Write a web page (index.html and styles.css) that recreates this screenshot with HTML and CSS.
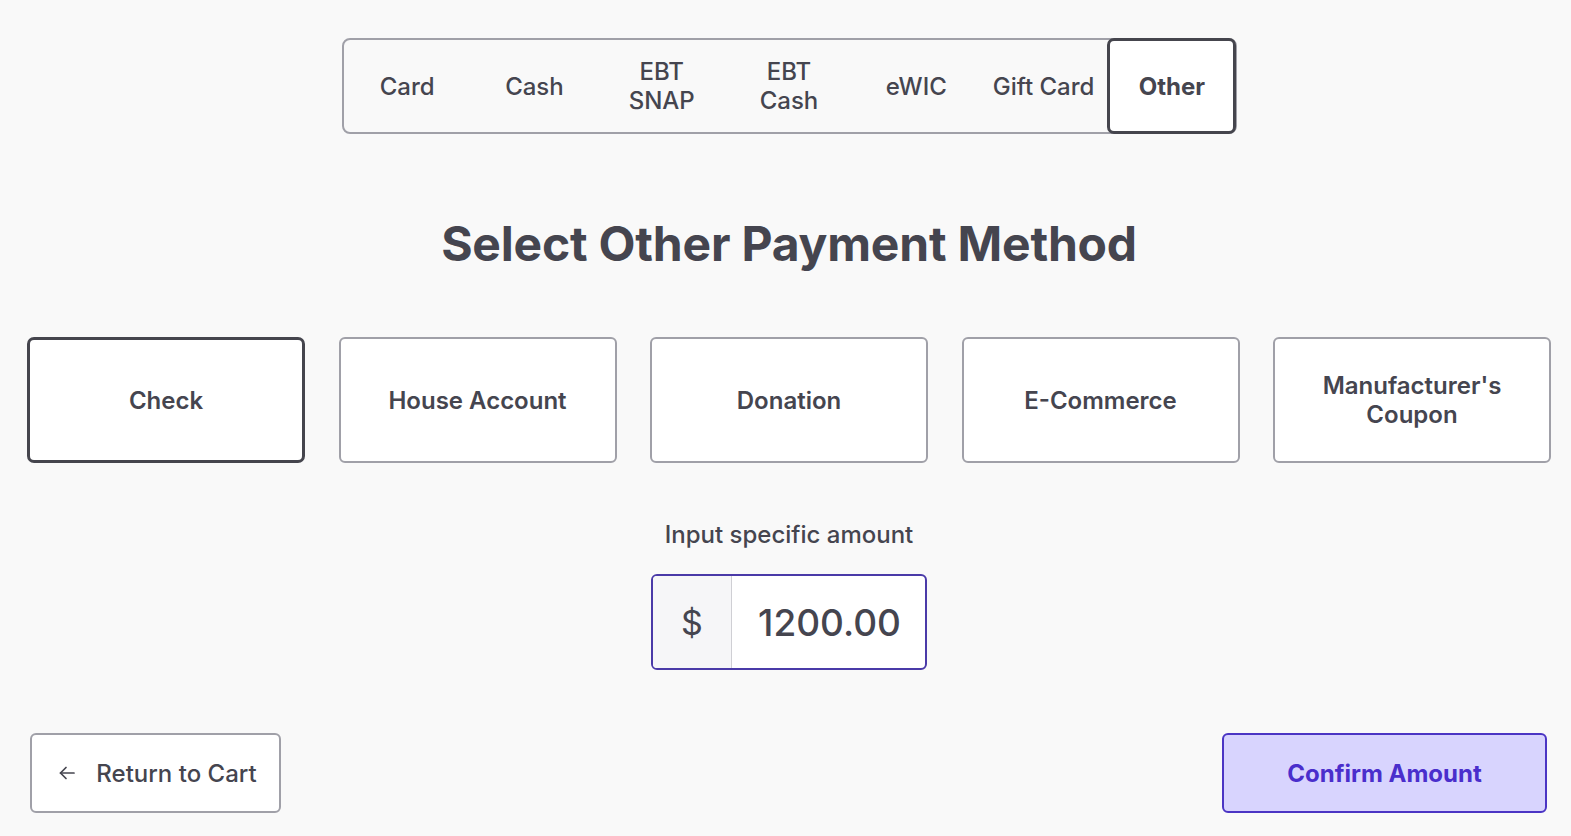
FILE: index.html
```html
<!DOCTYPE html>
<html lang="en">
<head>
<meta charset="utf-8">
<title>Select Other Payment Method</title>
<link rel="stylesheet" href="styles.css">
</head>
<body>
<main class="page">
  <nav class="tabs">
    <div class="tab">Card</div>
    <div class="tab">Cash</div>
    <div class="tab">EBT<br>SNAP</div>
    <div class="tab">EBT<br>Cash</div>
    <div class="tab">eWIC</div>
    <div class="tab">Gift Card</div>
    <div class="tab tab-active">Other</div>
  </nav>

  <h1 class="title">Select Other Payment Method</h1>

  <section class="options">
    <div class="option option-active">Check</div>
    <div class="option">House Account</div>
    <div class="option">Donation</div>
    <div class="option">E-Commerce</div>
    <div class="option">Manufacturer's<br>Coupon</div>
  </section>

  <label class="amount-label">Input specific amount</label>
  <div class="amount">
    <div class="amount-prefix">$</div>
    <div class="amount-value">1200.00</div>
  </div>

  <footer class="actions">
    <button class="btn btn-back">
      <svg class="arrow" width="18" height="18" viewBox="0 0 18 18" fill="none" stroke="currentColor" stroke-width="1.7" stroke-linecap="round" stroke-linejoin="round"><path d="M16 9H2.5"/><path d="M8 3.5L2.5 9L8 14.5"/></svg>
      <span>Return to Cart</span>
    </button>
    <button class="btn btn-confirm">Confirm Amount</button>
  </footer>
</main>
</body>
</html>
```

FILE: styles.css
```css
* { box-sizing: border-box; }
html, body { margin: 0; padding: 0; }
body {
  background: #f9f9f9;
  color: #45454f;
  font-family: Inter, "Noto Sans", "Liberation Sans", sans-serif;
  overflow: hidden;
}
.page {
  width: 1571px;
  height: 836px;
  display: flex;
  flex-direction: column;
  align-items: center;
  padding: 38px 20px 0 27px;
}
.tabs {
  width: 895px;
  height: 96px;
  border: 2px solid #a0a0a8;
  border-radius: 8px;
  display: grid;
  grid-template-columns: repeat(7, 1fr);
}
.tab {
  display: flex;
  align-items: center;
  justify-content: center;
  text-align: center;
  font-size: 24px;
  line-height: 29px;
  font-weight: 500;
  color: #45454f;
}
.tab-active {
  margin: -2px -2px -2px 0;
  background: #fff;
  border: 3px solid #45454d;
  border-radius: 7px;
  font-weight: 700;
}
.title {
  margin: 82px 0 0;
  height: 56px;
  line-height: 56px;
  font-size: 48px;
  font-weight: 700;
  color: #45454f;
  letter-spacing: -0.2px;
}
.options {
  margin-top: 65px;
  width: 1524px;
  display: grid;
  grid-template-columns: repeat(5, 1fr);
  gap: 33.5px;
}
.option {
  height: 126px;
  background: #fff;
  border: 2px solid #a0a0a8;
  border-radius: 6px;
  display: flex;
  align-items: center;
  justify-content: center;
  text-align: center;
  font-size: 24px;
  line-height: 29px;
  font-weight: 600;
  color: #45454f;
}
.option-active {
  border: 3px solid #45454d;
  border-radius: 7px;
}
.amount-label {
  margin-top: 57px;
  font-size: 24px;
  line-height: 30px;
  font-weight: 500;
  color: #45454f;
}
.amount {
  margin-top: 24px;
  width: 276px;
  height: 96px;
  border: 2px solid #4a3aa8;
  border-radius: 6px;
  background: #fff;
  display: flex;
  overflow: hidden;
}
.amount-prefix {
  width: 79px;
  background: #f6f6f8;
  border-right: 1px solid #cfcfd4;
  display: flex;
  align-items: center;
  justify-content: center;
  font-size: 34px;
  font-weight: 400;
  color: #45454f;
}
.amount-value {
  flex: 1;
  display: flex;
  align-items: center;
  justify-content: flex-end;
  padding-right: 24px;
  font-size: 37px;
  font-weight: 500;
  color: #45454f;
}
.actions {
  margin-top: 63px;
  width: 1524px;
  display: flex;
  justify-content: space-between;
  padding: 0 4px 0 3px;
}
.btn {
  height: 80px;
  border-radius: 6px;
  font-family: inherit;
  font-size: 24px;
  cursor: pointer;
  display: flex;
  align-items: center;
  justify-content: center;
}
.btn-back {
  width: 251px;
  background: #fff;
  border: 2px solid #a0a0a8;
  color: #45454f;
  font-weight: 500;
  gap: 20px;
  padding: 0 0 0 4px;
}
.arrow { display: block; }
.btn-confirm {
  width: 325px;
  background: #d8d4fe;
  border: 2px solid #4b35c4;
  color: #4a2ecc;
  font-weight: 700;
}
```
